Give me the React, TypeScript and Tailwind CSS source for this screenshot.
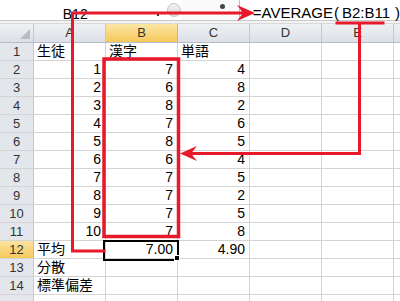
import React from "react";

const A = ["1","2","3","4","5","6","7","8","9","10"];
const B = ["7","6","8","7","8","6","7","7","7","7"];
const C = ["4","8","2","6","5","4","5","2","5","8"];

type Cell = { t: string; align?: "l" | "r" };

const rows: Cell[][] = [
  [{ t: "生徒" }, { t: "漢字" }, { t: "単語" }],
  ...A.map((a, i) => [
    { t: a, align: "r" as const },
    { t: B[i], align: "r" as const },
    { t: C[i], align: "r" as const },
  ]),
  [{ t: "平均" }, { t: "7.00", align: "r" }, { t: "4.90", align: "r" }],
  [{ t: "分散" }, { t: "" }, { t: "" }],
  [{ t: "標準偏差" }, { t: "" }, { t: "" }],
];

function DataCell({ c }: { c: Cell }) {
  return (
    <div
      className={
        "w-[72px] shrink-0 h-full border-r border-[#d4d4d4] flex items-center text-[14px] text-black whitespace-nowrap " +
        (c.align === "r" ? "justify-end pr-[4px]" : "justify-start pl-[3px]")
      }
    >
      {c.t}
    </div>
  );
}

export default function App() {
  return (
    <div className="relative w-[400px] h-[301px] overflow-hidden bg-white font-['Liberation_Sans','Noto_Sans_CJK_JP',sans-serif]">
      {/* formula bar */}
      <div className="flex h-[21px] border-b border-[#c9c9c9] bg-white">
        <div className="w-[160px] text-center pt-[7px] text-[14px] leading-[14px] text-black">B12</div>
        <div className="w-[18px] relative">
          <div className="absolute left-[7px] top-[14px] w-[2px] h-[2px] bg-[#333]" />
        </div>
        <div className="w-[14px] flex items-center">
          <div className="w-[14px] h-[14px] rounded-full border border-[#c4c4c4] bg-gradient-to-b from-[#f2f2f2] to-[#d9d9d9]" />
        </div>
        <div className="w-[61px] bg-[#fafafa] relative">
          <div className="absolute left-[39px] top-[4px] w-[5px] h-[5px] rounded-full bg-[#444]" />
        </div>
        <div className="flex-1 border-l border-[#bdbdbd] flex items-start pt-[5px] pl-[13px] text-[15px] leading-[15px] text-black font-['Liberation_Sans_Narrow','Liberation_Sans',sans-serif] whitespace-nowrap">
          <span>=AVERAGE</span>
          <span className="ml-[1px]">(</span>
          <span className="ml-[3px]">B2:B11</span>
          <span className="ml-[5px]">)</span>
        </div>
      </div>
      <div className="h-[3px] bg-[#f3f3f3] border-b border-[#d8d8d8]" />

      {/* column headers */}
      <div className="flex h-[19px] border-b border-[#b4bccb] text-[13px] text-[#333]">
        <div className="w-[34px] shrink-0 border-r border-[#c3c9d2] bg-gradient-to-b from-[#eef0f3] to-[#dde1e6] relative">
          <div className="absolute right-[3px] bottom-[3px] w-0 h-0 border-l-[10px] border-l-transparent border-b-[10px] border-b-[#b7bcc3]" />
        </div>
        {["A", "B", "C", "D", "E"].map((h) => (
          <div
            key={h}
            className={
              "w-[72px] shrink-0 border-r flex items-center justify-center " +
              (h === "B"
                ? "bg-gradient-to-b from-[#fbe6a4] to-[#f5c858] border-[#e2b45a]"
                : "bg-gradient-to-b from-[#eef0f3] to-[#dde1e6] border-[#c3c9d2]")
            }
          >
            {h}
          </div>
        ))}
        <div className="flex-1 bg-gradient-to-b from-[#eef0f3] to-[#dde1e6]" />
      </div>

      {/* rows */}
      {rows.map((r, i) => (
        <div key={i} className="flex h-[18px] border-b border-[#d4d4d4]">
          <div
            className={
              "w-[34px] shrink-0 border-r flex items-center justify-center text-[13px] text-[#333] " +
              (i === 11
                ? "bg-gradient-to-b from-[#fbe3a0] to-[#f5c95a] border-[#e2b45a]"
                : "bg-[#e3e6eb] border-[#c3c9d2]")
            }
          >
            {i + 1}
          </div>
          {r.map((c, j) => (
            <DataCell key={j} c={c} />
          ))}
          <DataCell c={{ t: "" }} />
          <DataCell c={{ t: "" }} />
          <div className="flex-1" />
        </div>
      ))}
      <div className="flex h-[10px]">
        <div className="w-[34px] shrink-0 border-r border-[#c3c9d2] bg-[#e3e6eb]" />
        {[0, 1, 2, 3, 4].map((k) => (
          <div key={k} className="w-[72px] shrink-0 border-r border-[#d4d4d4]" />
        ))}
      </div>

      {/* selected cell B12 */}
      <div className="absolute left-[103px] top-[240px] w-[76px] h-[21px] border-2 border-black" />
      <div className="absolute left-[174px] top-[255px] w-[6px] h-[6px] bg-black border border-white" />

      {/* red annotations */}
      <svg className="absolute inset-0" width="400" height="301" viewBox="0 0 400 301">
        <g fill="none" stroke="#e8192a" strokeWidth="3" strokeLinecap="square">
          <path d="M104 251 H72.5 V13 H246" />
          <path d="M337 23 H383" />
          <path d="M359.5 24 V153.5 H188" />
          <rect x="104" y="59" width="74.5" height="177.5" strokeWidth="3.5" />
        </g>
        <polygon points="255,13 237,5 243,13 237,21" fill="#e8192a" />
        <polygon points="180,153.5 197,146 191,153.5 197,161" fill="#e8192a" />
      </svg>
    </div>
  );
}
